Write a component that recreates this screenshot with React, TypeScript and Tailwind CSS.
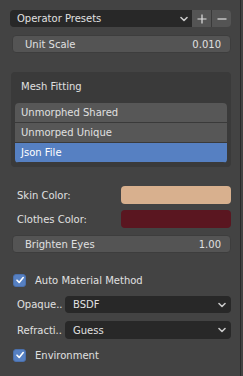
import React from 'react';

const Chevron: React.FC = () => (
  <svg width="8" height="6" viewBox="0 0 8 6" className="shrink-0">
    <path d="M1 1.5 L4 4.5 L7 1.5" fill="none" stroke="#c8c8c8" strokeWidth="1.6" strokeLinecap="round" strokeLinejoin="round" />
  </svg>
);

const Check: React.FC = () => (
  <div className="w-[13px] h-[13px] rounded-[3px] bg-[#5680c2] border border-[#4a70ad] flex items-center justify-center">
    <svg width="10" height="10" viewBox="0 0 10 10">
      <path d="M2 5.2 L4.2 7.4 L8.2 2.6" fill="none" stroke="#ffffff" strokeWidth="1.6" strokeLinecap="round" strokeLinejoin="round" />
    </svg>
  </div>
);

const NumField: React.FC<{ label: string; value: string }> = ({ label, value }) => (
  <div className="ml-[2px] h-[18px] rounded-[4px] bg-[#545454] border border-[#3d3d3d] flex items-center justify-between pl-[12px] pr-[9px]">
    <span>{label}</span>
    <span>{value}</span>
  </div>
);

const App: React.FC = () => {
  const items = [
    { id: 1, name: 'Unmorphed Shared', selected: false },
    { id: 2, name: 'Unmorped Unique', selected: false },
    { id: 3, name: 'Json File', selected: true },
  ];

  return (
    <div
      className="w-[243px] h-[376px] bg-[#434343] flex text-[10px] text-[#e0e0e0] overflow-hidden"
      style={{ fontFamily: '"DejaVu Sans", sans-serif' }}
    >
      <div className="w-[241px] border-r border-[#2b2b2b] pl-[10px] pr-[9px] pt-[10px] flex flex-col">
        {/* presets */}
        <div className="flex h-[17px]">
          <div className="flex-1 bg-[#282828] rounded-l-[4px] flex items-center justify-between pl-[7px] pr-[4px]">
            <span>Operator Presets</span>
            <Chevron />
          </div>
          <div className="w-[20px] bg-[#545454] border-r border-[#3a3a3a] flex items-center justify-center">
            <svg width="10" height="10" viewBox="0 0 10 10">
              <path d="M5 0.5 V9.5 M0.5 5 H9.5" stroke="#e0e0e0" strokeWidth="1.2" />
            </svg>
          </div>
          <div className="w-[19px] bg-[#545454] rounded-r-[4px] flex items-center justify-center">
            <svg width="10" height="10" viewBox="0 0 10 10">
              <path d="M0.5 5 H9.5" stroke="#e0e0e0" strokeWidth="1.2" />
            </svg>
          </div>
        </div>

        <div className="mt-[8px]">
          <NumField label="Unit Scale" value="0.010" />
        </div>

        {/* mesh fitting panel */}
        <div className="mt-[19px] ml-[1px] h-[95px] rounded-[4px] bg-[#3a3a3a] pt-[6px] px-[4px] pb-[4px] flex flex-col">
          <div className="pl-[6px] h-[16px] flex items-center">Mesh Fitting</div>
          <div className="mt-[9px] rounded-[4px] overflow-hidden">
            {items.map((item) => (
              <div
                key={item.id}
                className={`h-[20px] flex items-center pl-[6px] border-b border-[#3a3a3a] ${
                  item.selected ? 'bg-[#5680c2] text-white' : 'bg-[#575757]'
                }`}
              >
                {item.name}
              </div>
            ))}
          </div>
        </div>

        {/* colors */}
        <div className="mt-[19px] flex items-center h-[18px]">
          <span className="w-[111px] pl-[7px]">Skin Color:</span>
          <div className="flex-1 h-full rounded-[4px] bg-[#d8b08e]" />
        </div>
        <div className="mt-[6px] flex items-center h-[18px]">
          <span className="w-[111px] pl-[7px]">Clothes Color:</span>
          <div className="flex-1 h-full rounded-[4px] bg-[#5a1620]" />
        </div>

        <div className="mt-[7px]">
          <NumField label="Brighten Eyes" value="1.00" />
        </div>

        {/* material */}
        <div className="mt-[20px] flex items-center h-[14px] pl-[3px] gap-[9px]">
          <Check />
          <span>Auto Material Method</span>
        </div>

        <div className="mt-[9px] flex items-center h-[17px]">
          <span className="w-[55px] pl-[7px] whitespace-nowrap">Opaque..</span>
          <div className="flex-1 h-full bg-[#282828] rounded-[4px] flex items-center justify-between pl-[8px] pr-[5px]">
            <span>BSDF</span>
            <Chevron />
          </div>
        </div>
        <div className="mt-[8px] flex items-center h-[18px]">
          <span className="w-[55px] pl-[7px] whitespace-nowrap">Refracti..</span>
          <div className="flex-1 h-full bg-[#282828] rounded-[4px] flex items-center justify-between pl-[8px] pr-[5px]">
            <span>Guess</span>
            <Chevron />
          </div>
        </div>

        <div className="mt-[9px] flex items-center h-[14px] pl-[3px] gap-[9px]">
          <Check />
          <span>Environment</span>
        </div>
      </div>
    </div>
  );
};

export default App;
